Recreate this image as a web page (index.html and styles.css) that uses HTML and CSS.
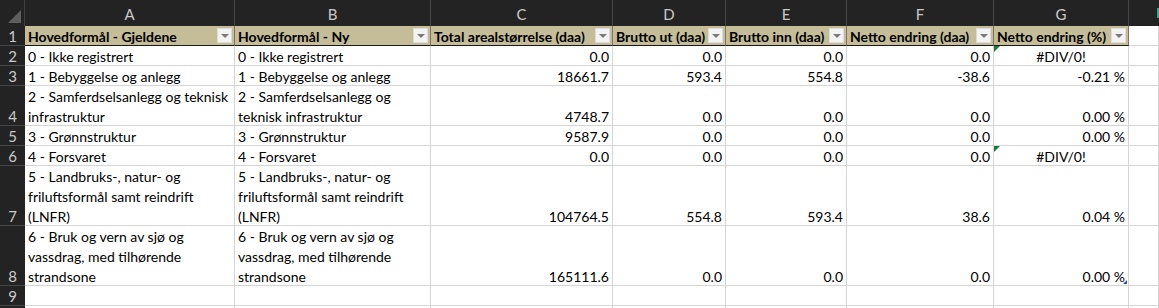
FILE: index.html
```html
<!DOCTYPE html>
<html lang="no">
<head>
<meta charset="utf-8">
<title>Hovedformål</title>
<link rel="stylesheet" href="styles.css">
</head>
<body>
<div class="sheet">
  <!-- column headers -->
  <div class="corner"><span class="corner-tri"></span></div>
  <div class="colh">A</div>
  <div class="colh">B</div>
  <div class="colh">C</div>
  <div class="colh">D</div>
  <div class="colh">E</div>
  <div class="colh">F</div>
  <div class="colh">G</div>
  <div class="colh colh-h"><span class="teal"></span></div>

  <!-- row 1 -->
  <div class="rowh">1</div>
  <div class="cell th"><span class="th-text">Hovedformål - Gjeldene</span><span class="fbtn"></span></div>
  <div class="cell th"><span class="th-text">Hovedformål - Ny</span><span class="fbtn"></span></div>
  <div class="cell th"><span class="th-text">Total arealstørrelse (daa)</span><span class="fbtn"></span></div>
  <div class="cell th"><span class="th-text">Brutto ut (daa)</span><span class="fbtn"></span></div>
  <div class="cell th"><span class="th-text">Brutto inn (daa)</span><span class="fbtn"></span></div>
  <div class="cell th"><span class="th-text">Netto endring (daa)</span><span class="fbtn"></span></div>
  <div class="cell th"><span class="th-text">Netto endring (%)</span><span class="fbtn"></span></div>
  <div class="cell"></div>

  <!-- row 2 -->
  <div class="rowh">2</div>
  <div class="cell"><span class="v">0 - Ikke registrert</span></div>
  <div class="cell"><span class="v">0 - Ikke registrert</span></div>
  <div class="cell num"><span class="v">0.0</span></div>
  <div class="cell num"><span class="v">0.0</span></div>
  <div class="cell num"><span class="v">0.0</span></div>
  <div class="cell num"><span class="v">0.0</span></div>
  <div class="cell center"><span class="flag"></span><span class="v">#DIV/0!</span></div>
  <div class="cell"></div>

  <!-- row 3 -->
  <div class="rowh">3</div>
  <div class="cell"><span class="v">1 - Bebyggelse og anlegg</span></div>
  <div class="cell"><span class="v">1 - Bebyggelse og anlegg</span></div>
  <div class="cell num"><span class="v">18661.7</span></div>
  <div class="cell num"><span class="v">593.4</span></div>
  <div class="cell num"><span class="v">554.8</span></div>
  <div class="cell num"><span class="v">-38.6</span></div>
  <div class="cell num pct"><span class="v">-0.21 %</span></div>
  <div class="cell"></div>

  <!-- row 4 -->
  <div class="rowh">4</div>
  <div class="cell"><span class="v">2 - Samferdselsanlegg og teknisk<br>infrastruktur</span></div>
  <div class="cell"><span class="v">2 - Samferdselsanlegg og<br>teknisk infrastruktur</span></div>
  <div class="cell num"><span class="v">4748.7</span></div>
  <div class="cell num"><span class="v">0.0</span></div>
  <div class="cell num"><span class="v">0.0</span></div>
  <div class="cell num"><span class="v">0.0</span></div>
  <div class="cell num pct"><span class="v">0.00 %</span></div>
  <div class="cell"></div>

  <!-- row 5 -->
  <div class="rowh">5</div>
  <div class="cell"><span class="v">3 - Grønnstruktur</span></div>
  <div class="cell"><span class="v">3 - Grønnstruktur</span></div>
  <div class="cell num"><span class="v">9587.9</span></div>
  <div class="cell num"><span class="v">0.0</span></div>
  <div class="cell num"><span class="v">0.0</span></div>
  <div class="cell num"><span class="v">0.0</span></div>
  <div class="cell num pct"><span class="v">0.00 %</span></div>
  <div class="cell"></div>

  <!-- row 6 -->
  <div class="rowh">6</div>
  <div class="cell"><span class="v">4 - Forsvaret</span></div>
  <div class="cell"><span class="v">4 - Forsvaret</span></div>
  <div class="cell num"><span class="v">0.0</span></div>
  <div class="cell num"><span class="v">0.0</span></div>
  <div class="cell num"><span class="v">0.0</span></div>
  <div class="cell num"><span class="v">0.0</span></div>
  <div class="cell center"><span class="flag"></span><span class="v">#DIV/0!</span></div>
  <div class="cell"></div>

  <!-- row 7 -->
  <div class="rowh">7</div>
  <div class="cell"><span class="v">5 - Landbruks-, natur- og<br>friluftsformål samt reindrift<br>(LNFR)</span></div>
  <div class="cell"><span class="v">5 - Landbruks-, natur- og<br>friluftsformål samt reindrift<br>(LNFR)</span></div>
  <div class="cell num"><span class="v">104764.5</span></div>
  <div class="cell num"><span class="v">554.8</span></div>
  <div class="cell num"><span class="v">593.4</span></div>
  <div class="cell num"><span class="v">38.6</span></div>
  <div class="cell num pct"><span class="v">0.04 %</span></div>
  <div class="cell"></div>

  <!-- row 8 -->
  <div class="rowh">8</div>
  <div class="cell"><span class="v">6 - Bruk og vern av sjø og<br>vassdrag, med tilhørende<br>strandsone</span></div>
  <div class="cell"><span class="v">6 - Bruk og vern av sjø og<br>vassdrag, med tilhørende<br>strandsone</span></div>
  <div class="cell num"><span class="v">165111.6</span></div>
  <div class="cell num"><span class="v">0.0</span></div>
  <div class="cell num"><span class="v">0.0</span></div>
  <div class="cell num"><span class="v">0.0</span></div>
  <div class="cell num pct"><span class="v">0.00 %</span><span class="handle"></span></div>
  <div class="cell"></div>

  <!-- row 9 -->
  <div class="rowh">9</div>
  <div class="cell"></div>
  <div class="cell"></div>
  <div class="cell"></div>
  <div class="cell"></div>
  <div class="cell"></div>
  <div class="cell"></div>
  <div class="cell"></div>
  <div class="cell"></div>

  <!-- row 10 (partial) -->
  <div class="rowh rowh-part"></div>
  <div class="cell part"></div>
  <div class="cell part"></div>
  <div class="cell part"></div>
  <div class="cell part"></div>
  <div class="cell part"></div>
  <div class="cell part"></div>
  <div class="cell part"></div>
  <div class="cell part"></div>
</div>
</body>
</html>
```
FILE: styles.css
```css
* { box-sizing: border-box; }

html, body {
  margin: 0;
  padding: 0;
  background: #ffffff;
  overflow: hidden;
}

.sheet {
  display: grid;
  grid-template-columns: 25px 210px 196px 182px 113px 121px 147px 135px 1fr;
  grid-template-rows: 26px 20px 20px 20px 40px 20px 20px 60px 60px 20px 2px;
  width: 1159px;
  height: 308px;
  font-family: Lato, "Open Sans", sans-serif;
  font-size: 14px;
  color: #000;
}

.corner {
  position: relative;
  background: #232323;
  border-right: 1px solid #3f3f3f;
}

.corner-tri {
  position: absolute;
  right: 3px;
  bottom: 3px;
  width: 0;
  height: 0;
  border-left: 13px solid transparent;
  border-bottom: 13px solid #5f5f5f;
}

.colh {
  position: relative;
  background: #232323;
  color: #c9c9c9;
  border-right: 1px solid #454545;
  display: flex;
  align-items: center;
  justify-content: center;
  padding-top: 1px;
  font-size: 15px;
}

.colh-h { border-right: none; }

.teal {
  position: absolute;
  right: 0;
  top: 8px;
  width: 2px;
  height: 10px;
  background: #3aa58a;
}

.rowh {
  background: #232323;
  color: #c9c9c9;
  border-bottom: 1px solid #474747;
  display: flex;
  align-items: flex-end;
  justify-content: center;
  font-size: 15px;
  line-height: 17px;
}

.rowh-part { border-bottom: none; }

.cell {
  position: relative;
  background: #fff;
  border-right: 1px solid #d5d5d5;
  border-bottom: 1px solid #d5d5d5;
  padding: 0 3px;
  display: flex;
  align-items: flex-end;
  line-height: 20px;
  white-space: nowrap;
}

.part { border-bottom: none; }

.v {
  display: block;
  margin-bottom: -2px;
}

.num { justify-content: flex-end; }

.center { justify-content: center; }

.th {
  background: #c4bd97;
  font-weight: 700;
  border-right: 1px solid #7b7766;
  border-bottom: 1px solid #1a1a1a;
  justify-content: space-between;
  align-items: center;
  padding: 0 2px 0 3px;
}

.th-text {
  line-height: 19px;
  padding-top: 2px;
}

.fbtn {
  position: relative;
  flex: none;
  width: 15px;
  height: 15px;
  background: #f3f3f3;
  border: 1px solid #dcdcdc;
}

.fbtn::after {
  content: "";
  position: absolute;
  left: 3px;
  top: 5px;
  width: 0;
  height: 0;
  border-left: 4px solid transparent;
  border-right: 4px solid transparent;
  border-top: 4px solid #7a7a7a;
}

.flag {
  position: absolute;
  left: 0;
  top: 0;
  width: 0;
  height: 0;
  border-top: 6px solid #1e7a3a;
  border-right: 6px solid transparent;
}

.handle {
  position: absolute;
  right: 1px;
  bottom: 1px;
  width: 0;
  height: 0;
  border-left: 4px solid transparent;
  border-bottom: 4px solid #3b4f8f;
}
```
